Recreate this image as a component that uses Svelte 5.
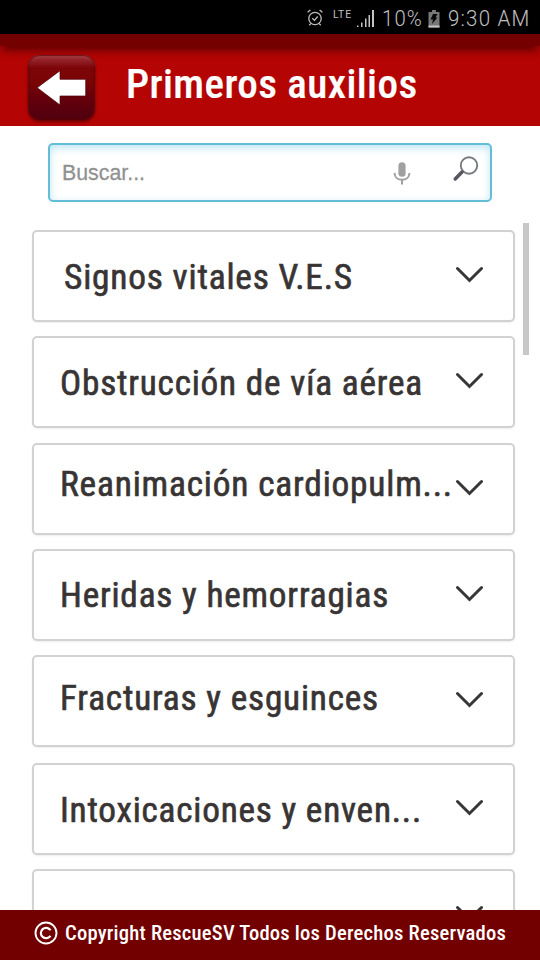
<script>
  const items = [
    { label: 'Signos vitales V.E.S', width: 289, left: 30, shift: 1, gap: 14 },
    { label: 'Obstrucción de vía aérea', width: 363, left: 26, shift: 1, gap: 15 },
    { label: 'Reanimación cardiopulm...', width: 393, left: 26, shift: -5, gap: 14 },
    { label: 'Heridas y hemorragias', width: 329, left: 26, shift: 0, gap: 14 },
    { label: 'Fracturas y esguinces', width: 319, left: 26, shift: -3, gap: 16 },
    { label: 'Intoxicaciones y enven...', width: 362, left: 26, shift: 1, gap: 14 },
    { label: '', width: 0, left: 26, shift: 0, gap: 0 }
  ];

  // Condenses a line of text to the given advance width.
  function fit(node, width) {
    const apply = () => {
      node.style.transform = 'none';
      const natural = node.getBoundingClientRect().width;
      if (natural > 0) node.style.transform = `scaleX(${width / natural})`;
    };
    apply();
    document.fonts?.ready.then(apply);
  }
</script>

<div class="screen">
  <div class="status">
    <svg class="alarm" width="16" height="18" viewBox="0 0 16 18" fill="none" stroke="#bdbdbd" stroke-width="1.3">
      <circle cx="8" cy="9.5" r="6.200" />
      <path d="M5.3 9.2l2.2 2.1 3.2-3.8M.6 3.2l2.800-2.300M15.400 3.200l-2.800-2.300M3.8 14.5l-1.5 1.7M12.2 14.5l1.5 1.7" />
    </svg>
    <span class="lte"><span class="line" use:fit={19}>LTE</span></span>
    <svg class="signal" width="18" height="18" viewBox="0 0 18 18" fill="#c4c4c4">
      <path d="M1 15.500h1.500V17H1zM5 12.500h1.500V17H5zM9 8.500h1.500V17H9zM12.500 5H14v12h-1.500zM16 0h2v17h-2z" />
    </svg>
    <span class="percent"><span class="line" use:fit={41}>10%</span></span>
    <svg class="battery" width="12" height="18" viewBox="0 0 12 18">
      <path d="M4 0h4v2h3.500v15.500H.5V2H4z" fill="#777" />
      <path d="M.5 15.500h11v2H.5z" fill="#c4c4c4" />
      <path d="M5 4h4.500L7.500 7.500h2L4 14l1-4.500H2.500z" fill="#080808" />
    </svg>
    <span class="time"><span class="line" use:fit={82.5}>9:30 AM</span></span>
  </div>

  <header>
    <div class="shade"></div>
    <button class="back" aria-label="Volver">
      <svg width="67" height="65" viewBox="0 0 67 65">
        <path d="M9.200 32.700L32 15.700v8.600h25.700v16.700H32V50z" fill="#fff" stroke="#4b0007" stroke-width=".7" />
      </svg>
    </button>
    <h1><span class="line" use:fit={291.5}>Primeros auxilios</span></h1>
  </header>

  <main>
    <div class="search">
      <span class="placeholder"><span class="line" use:fit={83}>Buscar...</span></span>
      <svg class="mic" width="18" height="24" viewBox="0 0 18 24" fill="none" stroke="#a0a0a0">
        <rect x="5.400" y=".3" width="7.200" height="14.500" rx="3.600" fill="#a0a0a0" stroke="none" />
        <path d="M1.500 11c.2 4.100 3.400 6.800 7.500 6.800s7.300-2.700 7.500-6.800M9 18v4.500" stroke-width="2" />
      </svg>
      <svg class="lens" width="28" height="28" viewBox="0 0 28 28" fill="none">
        <circle cx="17" cy="10.500" r="8.200" stroke="#777b80" stroke-width="1.900" />
        <path d="M10 17l-6.800 7" stroke="#55585e" stroke-width="3.500" stroke-linecap="round" />
      </svg>
    </div>

    <div class="list">
      {#each items as item}
        <section style="margin-bottom: {item.gap}px; padding-left: {item.left}px">
          <div class="label" style="margin-top: {item.shift * 2}px"><span class="line" use:fit={item.width}>{item.label}</span></div>
          <svg class="chevron" width="28" height="18" viewBox="0 0 28 18" fill="none">
            <path d="M2.500 3.500L14.500 15.500 26.500 3.500" stroke="#37373a" stroke-width="3" stroke-linecap="round" />
          </svg>
        </section>
      {/each}
    </div>
    <div class="scrollbar"></div>
  </main>

  <footer>
    <svg width="24" height="24" viewBox="0 0 24 24" fill="none" stroke="#fff">
      <circle cx="12" cy="12" r="10.500" stroke-width="1.900" />
      <path d="M16.500 9.300a5.200 5.200 0 1 0 0 5.400" stroke-width="2.200" />
    </svg>
    <span class="line" use:fit={441}>Copyright RescueSV Todos los Derechos Reservados</span>
  </footer>
</div>

<style>
  :global(body) { margin: 0; background: #fff; }
  .screen {
    width: 540px;
    height: 960px;
    display: flex;
    flex-direction: column;
    overflow: hidden;
    background: #fff;
    font-family: "Roboto Condensed", Roboto, sans-serif;
    font-stretch: condensed;
  }
  .line { display: inline-block; transform-origin: 0 50%; white-space: nowrap; }
  .status {
    height: 34px;
    flex: none;
    display: flex;
    background: #000;
    color: #c0c0c0;
    font: 300 22px/26px Roboto, sans-serif;
    letter-spacing: 1.3px;
  }
  .alarm { margin: 9px 0 0 307px; }
  .lte { width: 18px; margin: 9px 0 0 10px; font-size: 11px; line-height: 11px; font-weight: 400; letter-spacing: 1px; }
  .signal { margin: 10px 0 0 5px; }
  .percent { width: 40px; margin: 6px 0 0 8px; }
  .battery { margin: 10px 0 0 6px; }
  .time { width: 84px; margin: 6px 0 0 8px; }
  header {
    height: 92px;
    flex: none;
    position: relative;
    display: flex;
    background: #b40404;
    overflow: hidden;
  }
  .shade {
    position: absolute;
    inset: 0 0 auto;
    height: 12px;
    background: #740000;
    box-shadow: 0 5px 10px -2px #400000;
  }
  .back {
    position: relative;
    width: 67px;
    height: 65px;
    margin: 21px 0 0 28px;
    padding: 0;
    border: 0;
    border-radius: 12px;
    background: linear-gradient(#a8333a 0, #8f1d23 10%, #7c0508 20%, #7b0505 42%, #65000b 65%, #50000f 100%);
    box-shadow: inset 0 0 2px 1px #590006, inset 0 2px 2px #b4545a, 0 2px 3px #690000;
  }
  .back svg { display: block; }
  h1 {
    margin: 26px 0 0 31px;
    width: 300px;
    color: #fff;
    font-size: 41px;
    line-height: 48px;
    font-weight: 500;
    letter-spacing: .4px;
    -webkit-text-stroke: .2px #fff;
  }
  main { flex: 1; min-height: 0; position: relative; overflow: hidden; }
  .search {
    box-sizing: border-box;
    width: 444px;
    height: 59px;
    margin: 17px 0 0 48px;
    display: flex;
    border: 2px solid #61bdd8;
    border-radius: 5px;
    box-shadow: inset 0 3px 9px #bfe6f1;
  }
  .placeholder {
    width: 330px;
    margin: 15px 0 0 12px;
    color: #919191;
    font: 22px/26px "Liberation Sans", Arial, sans-serif;
    -webkit-text-stroke: .3px #919191;
  }
  .mic { margin: 17px 0 0 1px; }
  .lens { margin: 10px 0 0 41px; }
  .list { margin: 28px 0 0 32px; width: 483px; }
  section {
    box-sizing: border-box;
    height: 92px;
    padding-right: 30px;
    display: flex;
    align-items: center;
    border: 2px solid #d2d2d2;
    border-radius: 5px;
    box-shadow: 0 1px 2px #eee;
    background: #fff;
  }
  .label {
    flex: 1;
    width: 0;
    color: #383434;
    font-size: 35.500px;
    line-height: 42px;
    font-weight: 400;
    letter-spacing: .8px;
    white-space: nowrap;
    -webkit-text-stroke: .65px #383434;
  }
  .chevron { flex: none; margin-top: -4px; }
  .scrollbar {
    position: absolute;
    top: 97px;
    right: 11px;
    width: 6px;
    height: 132px;
    background: #c8c8c8;
  }
  footer {
    height: 50px;
    flex: none;
    box-sizing: border-box;
    padding: 11px 0 0 34px;
    display: flex;
    gap: 7px;
    background: #730000;
    color: #fff;
    font-size: 20px;
    line-height: 24px;
    font-weight: 500;
    letter-spacing: .2px;
  }
  footer svg { flex: none; }
</style>
